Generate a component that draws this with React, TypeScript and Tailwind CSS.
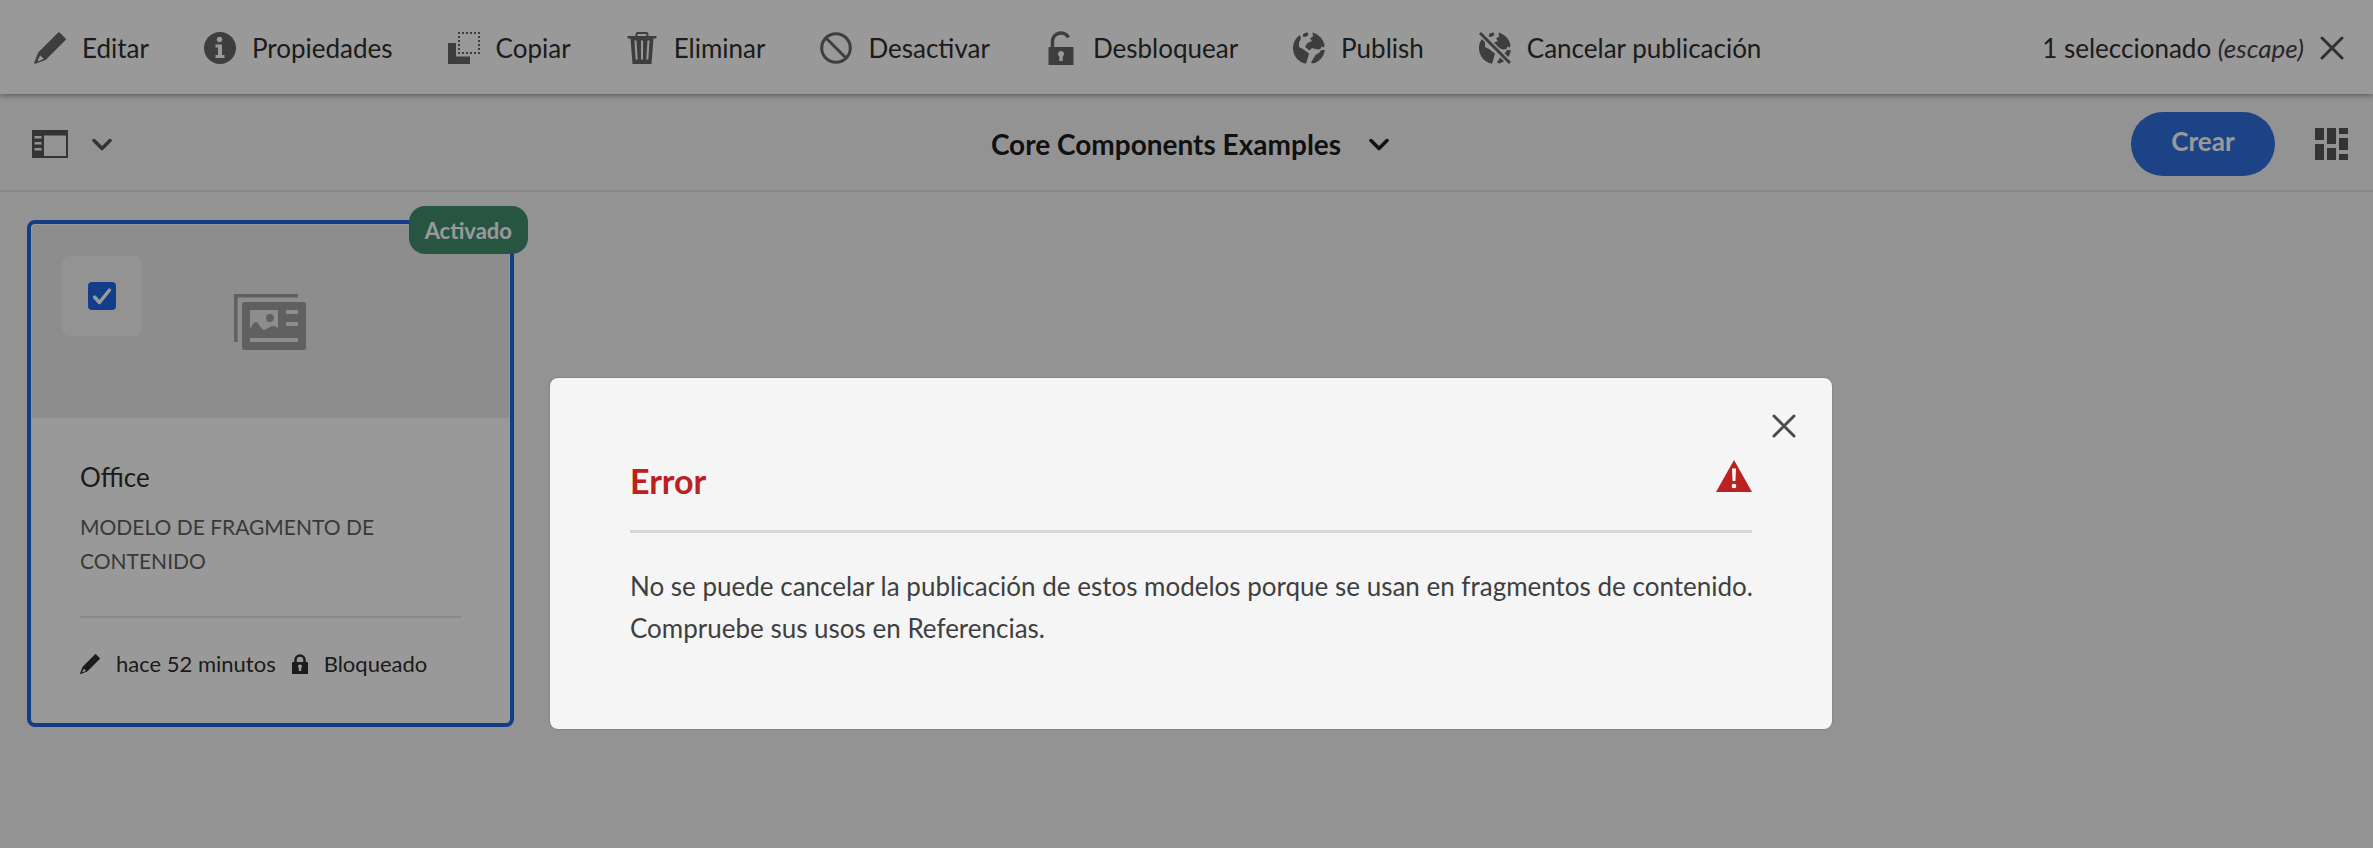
import type { ReactNode } from "react";

type IconProps = { className?: string };

function PencilIcon({ className = "size-8" }: IconProps) {
  return (
    <svg viewBox="0 0 32 32" className={className} fill="currentColor" aria-hidden="true">
      <path fillRule="evenodd" d="M24.2.5a1 1 0 0 1 1.4 0l6 6a1 1 0 0 1 0 1.400L11.600 27.900 1.200 31.800a.8.8 0 0 1-1-1L4.200 20.500ZM6.200 23.500 3.600 28.400 4.500 29.200 9.800 26.700Z" />
    </svg>
  );
}

function InfoIcon() {
  return (
    <svg viewBox="0 0 32 32" className="size-8" aria-hidden="true">
      <circle cx="16" cy="16" r="16" fill="currentColor" />
      <circle cx="15.500" cy="7.500" r="2.700" fill="#fff" />
      <path d="M11.500 12.500h6.500v10.500h2.500v3h-9v-3h2.500v-7.500h-2.500z" fill="#fff" />
    </svg>
  );
}

function CopyIcon() {
  return (
    <svg viewBox="0 0 32 32" className="size-8" aria-hidden="true">
      <path d="M0 11h8v13.500h14V32H0z" fill="currentColor" />
      <rect x="11" y="1" width="20" height="20" fill="none" stroke="currentColor" strokeWidth="2" strokeDasharray="2 2" strokeDashoffset="1" />
    </svg>
  );
}

function TrashIcon() {
  return (
    <svg viewBox="0 0 32 32" className="size-8" aria-hidden="true">
      <path d="M1.500 4h29v2.500h-3L25.500 32h-19L4.500 6.500h-3z" fill="currentColor" />
      <path d="M10.500 4V2.200Q10.500 1 11.700 1h8.600Q21.500 1 21.500 2.200V4" fill="none" stroke="currentColor" strokeWidth="2" />
      <path d="M9.500 8.500l1.200 19M16 8.500v19M22.500 8.500l-1.200 19" stroke="#fff" strokeWidth="2" fill="none" />
    </svg>
  );
}

function CancelIcon() {
  return (
    <svg viewBox="0 0 32 32" className="size-8" fill="none" stroke="currentColor" strokeWidth="3" aria-hidden="true">
      <circle cx="16" cy="16" r="14.300" />
      <path d="M6 6l20 20" />
    </svg>
  );
}

function UnlockIcon() {
  return (
    <svg viewBox="0 0 32 34" className="h-[34px] w-8" aria-hidden="true">
      <path d="M7.500 18V10a8.500 8.500 0 0 1 16-3.500" fill="none" stroke="currentColor" strokeWidth="3.500" />
      <path fillRule="evenodd" fill="currentColor" d="M4.500 16h23a1 1 0 0 1 1 1v17h-25V17a1 1 0 0 1 1-1ZM16 20a3 3 0 0 0-1.700 5.500V30h3.400v-4.500A3 3 0 0 0 16 20Z" />
    </svg>
  );
}

const GLOBE = (
  <>
    <path d="M7 3C2.500 6 0 10.800 0 16.300 0 24 5.500 30.500 13 31.800L14.500 27 16 21.500 10 17 6 15 6 10.500 8 6.500Z" />
    <path d="M10.500 1.500 14.500.300 15.500 3 12.500 5 9.500 4.500Z" />
    <path d="M19.500.400C25.500 2 30 6.500 31.500 12.500L31 15.500 28.500 14.500 27.500 17 24.500 17.500 19 16 16.500 18.500 12 15 14.500 11 19 9 17 6.500 20 4.500Z" />
    <path d="M31.800 18C31 24.500 26.500 30 20 31.500L18 30.500 22.500 23 26.500 20.500 28 18Z" />
  </>
);

function GlobeIcon() {
  return (
    <svg viewBox="0 0 32 32" className="size-8" fill="currentColor" aria-hidden="true">
      {GLOBE}
    </svg>
  );
}

function GlobeOffIcon() {
  return (
    <svg viewBox="0 0 32 32" className="size-8" fill="currentColor" aria-hidden="true">
      {GLOBE}
      <path d="M-1-1 33 33" stroke="#fff" strokeWidth="6" />
      <path d="M1 1 31 31" stroke="currentColor" strokeWidth="3" />
    </svg>
  );
}

function CrossIcon() {
  return (
    <svg viewBox="0 0 24 24" className="size-6" fill="none" stroke="currentColor" strokeWidth="3" strokeLinecap="round" aria-hidden="true">
      <path d="M2 2 22 22M22 2 2 22" />
    </svg>
  );
}

function ChevronIcon() {
  return (
    <svg viewBox="0 0 20 13" className="h-[13px] w-5" fill="none" stroke="currentColor" strokeWidth="3.500" strokeLinecap="round" strokeLinejoin="round" aria-hidden="true">
      <path d="M2 2.500 10 10.500 18 2.500" />
    </svg>
  );
}

function RailIcon() {
  return (
    <svg viewBox="0 0 36 28" className="h-7 w-9" aria-hidden="true">
      <path fillRule="evenodd" fill="currentColor" d="M0 0h36v28H0ZM12 5.500v20.500h22V5.500ZM2.500 6v2.500h7V6ZM2.500 12v2.500h7V12ZM2.500 18v2.500h7V18Z" />
    </svg>
  );
}

function CardViewIcon() {
  return (
    <svg viewBox="0 0 33 32" className="h-8 w-[33px]" fill="currentColor" aria-hidden="true">
      <path d="M0 0h9v12H0zM0 16h9v16H0zM12 0h9v16h-9zM12 20h9v12h-9zM24 0h9v6h-9zM24 10h9v12h-9zM24 26h9v6h-9z" />
    </svg>
  );
}

function FragmentIcon() {
  return (
    <svg viewBox="0 0 72 56" className="h-14 w-[72px]" aria-hidden="true">
      <path d="M1.800 48V1.800H64" fill="none" stroke="currentColor" strokeWidth="3.500" />
      <path
        fillRule="evenodd"
        fill="currentColor"
        d="M10 8h60a2 2 0 0 1 2 2v44a2 2 0 0 1-2 2H10a2 2 0 0 1-2-2V10a2 2 0 0 1 2-2ZM16 16V35C18 31 20 28 22 28 25 28 26 35 30 36 33 35 36 32 39 32 41 32 43 33 44 34V16ZM36 20a4 4 0 1 1 0 8 4 4 0 1 1 0-8ZM52 16v4h12v-4ZM52 28v4h12v-4ZM16 44v4h48v-4Z"
      />
    </svg>
  );
}

function LockIcon() {
  return (
    <svg viewBox="0 0 16 20" className="h-5 w-4" aria-hidden="true">
      <path d="M3.500 9V6a4.500 4.500 0 0 1 9 0v3" fill="none" stroke="currentColor" strokeWidth="2.500" />
      <path fillRule="evenodd" fill="currentColor" d="M1 8h14a1 1 0 0 1 1 1v11H0V9a1 1 0 0 1 1-1ZM8 10.500a2 2 0 0 0-1.200 3.600V17h2.400v-2.900A2 2 0 0 0 8 10.500Z" />
    </svg>
  );
}

function AlertIcon() {
  return (
    <svg viewBox="0 0 36 32" className="h-8 w-9 text-[#bb2121]" aria-hidden="true">
      <path d="M18 0 36 32H0Z" fill="currentColor" />
      <path d="M16 8.500h4l-.6 12.500h-2.800z" fill="#fff" />
      <circle cx="18" cy="26" r="2.300" fill="#fff" />
    </svg>
  );
}

const ACTIONS: { label: string; icon: ReactNode }[] = [
  { label: "Editar", icon: <PencilIcon /> },
  { label: "Propiedades", icon: <InfoIcon /> },
  { label: "Copiar", icon: <CopyIcon /> },
  { label: "Eliminar", icon: <TrashIcon /> },
  { label: "Desactivar", icon: <CancelIcon /> },
  { label: "Desbloquear", icon: <UnlockIcon /> },
  { label: "Publish", icon: <GlobeIcon /> },
  { label: "Cancelar publicación", icon: <GlobeOffIcon /> },
];

function ActionBar() {
  return (
    <header className="relative flex h-[94px] items-center justify-between bg-white pt-0.5 pr-[29px] pl-[34px] text-[#2f2f2f] shadow-[0_1px_6px_rgba(0,0,0,0.45)]">
      <nav aria-label="Acciones" className="flex items-center gap-[55px]">
        {ACTIONS.map(({ label, icon }) => (
          <button key={label} type="button" className="flex items-center gap-4 whitespace-nowrap">
            <span className="text-[#686868]">{icon}</span>
            {label}
          </button>
        ))}
      </nav>
      <button type="button" className="flex items-center gap-4 whitespace-nowrap">
        <span>
          1 seleccionado <em className="text-[#444]">(escape)</em>
        </span>
        <span className="text-[#505050]">
          <CrossIcon />
        </span>
      </button>
    </header>
  );
}

function TitleBar() {
  return (
    <div className="grid h-[98px] grid-cols-[1fr_auto_1fr] items-center border-b-2 border-[#e4e4e4] pt-1 pr-[25px] pl-8 text-[#585858]">
      <button type="button" aria-label="Panel lateral" className="flex items-center gap-6 justify-self-start">
        <RailIcon />
        <ChevronIcon />
      </button>
      <button type="button" className="flex items-center gap-7 text-[28px] font-bold text-[#1c1c1c]">
        Core Components Examples
        <ChevronIcon />
      </button>
      <div className="flex items-center gap-10 justify-self-end">
        <button type="button" className="h-16 w-36 rounded-full bg-[#3070e0] pb-1.5 font-bold text-white">
          Crear
        </button>
        <button type="button" aria-label="Vista de tarjetas">
          <CardViewIcon />
        </button>
      </div>
    </div>
  );
}

function ModelCard() {
  return (
    <article className="relative w-[487px] rounded-lg border-4 border-[#2064e4] bg-white p-px">
      <span className="absolute -top-[18px] -right-[18px] flex h-12 items-center rounded-2xl bg-[#438e6e] px-4 text-[22px] font-bold text-white">
        Activado
      </span>
      <div className="flex h-[193px] items-start rounded-t-sm bg-[#ebebeb] text-[#a0a0a0]">
        <label className="mt-[31px] ml-[30px] flex size-20 items-center justify-center rounded-lg bg-[#f5f5f5]">
          <span className="grid">
            <input
              type="checkbox"
              aria-label="Office"
              defaultChecked
              className="col-start-1 row-start-1 size-7 appearance-none rounded-sm bg-[#2064e4]"
            />
            <svg viewBox="0 0 28 28" className="pointer-events-none col-start-1 row-start-1 size-7" fill="none" stroke="#fff" strokeWidth="3.500" strokeLinecap="round" strokeLinejoin="round" aria-hidden="true">
              <path d="M6.500 15 11.500 20.500 21.500 8" />
            </svg>
          </span>
        </label>
        <span className="mt-[69px] ml-[92px]">
          <FragmentIcon />
        </span>
      </div>
      <div className="px-12 pt-[38px] pb-10 text-[#2f2f2f]">
        <h2 className="leading-[42px]">Office</h2>
        <p className="mt-3 text-[21px] leading-[34px] text-[#606060] uppercase">Modelo de fragmento de contenido</p>
        <div className="mt-[38px] flex items-center border-t-2 border-[#e6e6e6] pt-7 text-[22px] leading-9">
          <PencilIcon className="size-5" />
          <span className="ml-4">hace 52 minutos</span>
          <span className="ml-4">
            <LockIcon />
          </span>
          <span className="ml-4">Bloqueado</span>
        </div>
      </div>
    </article>
  );
}

function ErrorDialog() {
  return (
    <div className="absolute inset-0 flex items-start justify-center bg-black/40 pt-[378px] pl-[9px]">
      <section
        role="alertdialog"
        aria-labelledby="error-title"
        aria-describedby="error-text"
        className="relative w-full max-w-[1282px] rounded-lg bg-[#f5f5f5] p-20 shadow-[0_0_2px_rgba(0,0,0,0.3)]"
      >
        <button type="button" aria-label="Cerrar" className="absolute top-9 right-9 text-[#4b4b4b]">
          <CrossIcon />
        </button>
        <div className="flex items-start justify-between border-b-3 border-[#d8d8d8] pb-[26px]">
          <h1 id="error-title" className="text-[34px] leading-[46px] font-bold text-[#bb2121]">
            Error
          </h1>
          <span className="pt-0.5">
            <AlertIcon />
          </span>
        </div>
        <p id="error-text" className="-mr-8 mt-8 leading-[42px] text-[#3f3f3f]">
          No se puede cancelar la publicación de estos modelos porque se usan en fragmentos de contenido.
          <br />
          Compruebe sus usos en Referencias.
        </p>
      </section>
    </div>
  );
}

export default function App() {
  return (
    <div className="relative min-h-screen bg-[#f5f5f5] font-['Lato',sans-serif] text-[26px]">
      <ActionBar />
      <TitleBar />
      <main className="px-[27px] pt-7">
        <ModelCard />
      </main>
      <ErrorDialog />
    </div>
  );
}
